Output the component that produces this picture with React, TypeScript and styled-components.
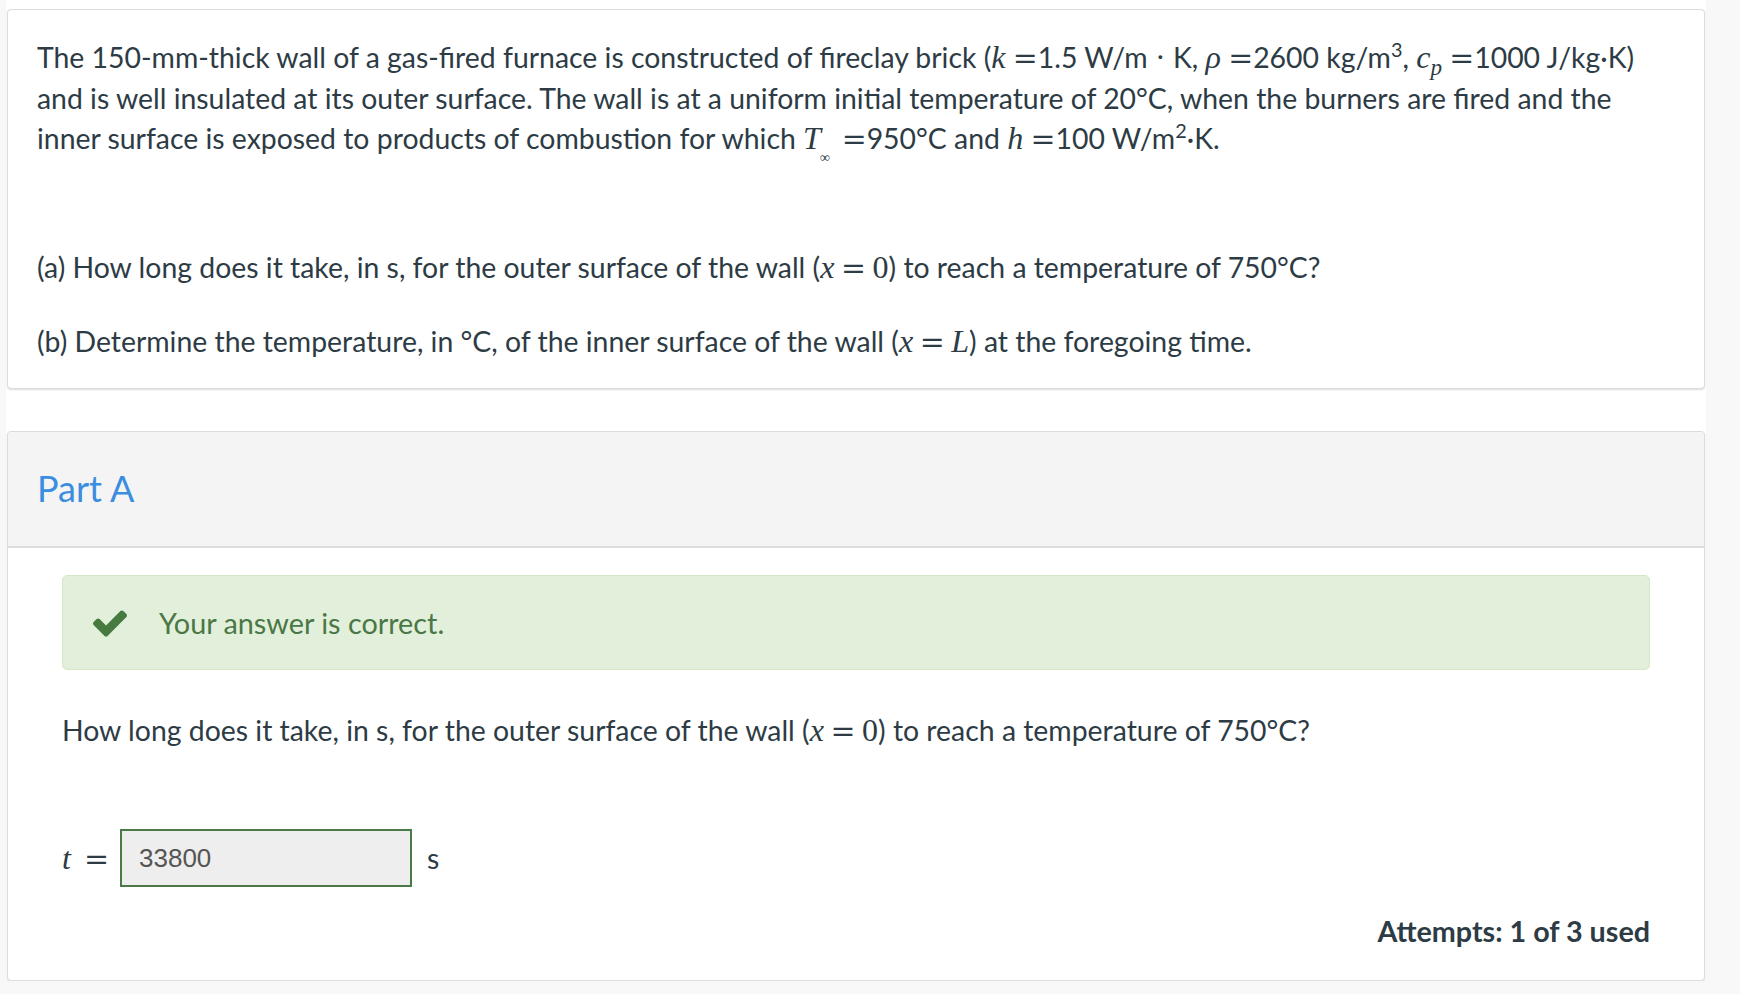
import React from "react";
import styled, { createGlobalStyle } from "styled-components";

const GlobalStyle = createGlobalStyle`
  html, body {
    margin: 0;
    padding: 0;
    background: #f8f8f8;
  }
  body {
    font-family: Lato, "Open Sans", sans-serif;
    color: #2d3b45;
  }
`;

const Page = styled.main`
  margin-left: 6px;
  width: 1700px;
  background: #fff;
  padding-top: 9px;
`;

const Card = styled.section`
  margin: 0 1px;
  background: #fff;
  border: 1px solid #dcdcdc;
  border-radius: 4px;
  box-shadow: 0 1px 2px rgba(0, 0, 0, 0.14);
  overflow: hidden;
`;

const Spacer = styled.div<{ $h: number }>`
  height: ${(p) => p.$h}px;
`;

const QuestionBody = styled.div`
  padding: 27px 14px 26px 29px;
`;

const Para = styled.p<{ $after?: number }>`
  margin: 0 0 ${(p) => p.$after ?? 33}px;
  font-size: 28.4px;
  line-height: 40px;
  &:last-child {
    margin-bottom: 0;
  }
`;

// math variables, in the look of a TeX italic
const M = styled.span`
  font-family: "Liberation Serif", "Times New Roman", serif;
  font-style: italic;
  font-size: 1.13em;
`;

const Num = styled.span`
  font-family: "Liberation Serif", "Times New Roman", serif;
  font-size: 1.13em;
`;

// relation sign: wide TeX-like equals, with optional thick spaces
const Rel = styled.span<{ $spaced?: boolean }>`
  font-family: "DejaVu Serif", "Liberation Serif", serif;
  font-size: 1.05em;
  margin: 0 ${(p) => (p.$spaced ? "0.22em" : "0")};
`;

const Sup = styled.sup`
  font-size: 0.7em;
  line-height: 0;
  vertical-align: 0.55em;
`;

const Sub = styled.sub`
  font-size: 0.72em;
  line-height: 0;
  vertical-align: -0.3em;
`;

const Inf = styled.sub`
  font-family: "Liberation Serif", serif;
  font-style: italic;
  font-size: 0.48em;
  line-height: 0;
  vertical-align: -0.95em;
  margin: 0 12px 0 -1px;
`;

const PartHeader = styled.header`
  background: #f4f4f4;
  border-bottom: 2px solid #dcdcdc;
  padding: 35px 29px 36px;
`;

const PartTitle = styled.h2`
  margin: 0;
  font-size: 36px;
  line-height: 43px;
  font-weight: 400;
  color: #3b8de0;
`;

const PartBody = styled.div`
  padding: 27px 54px 29px 54px;
`;

const Alert = styled.div`
  display: flex;
  align-items: center;
  gap: 32px;
  height: 95px;
  box-sizing: border-box;
  padding: 0 30px;
  background: #e2efda;
  border: 1px solid #d5e7c8;
  border-radius: 5px;
  color: #4a7746;
  font-size: 28.8px;
`;

const CheckSvg = styled.svg`
  width: 34px;
  height: 27px;
  flex-shrink: 0;
  fill: #467a41;
  margin-top: 2px;
`;

function CheckIcon() {
  return (
    <CheckSvg viewBox="121 334 1550 1188" aria-hidden>
      <path d="M1671 566q0 40-28 68l-724 724-136 136q-28 28-68 28t-68-28l-136-136-362-362q-28-28-28-68t28-68l136-136q28-28 68-28t68 28l294 295 656-657q28-28 68-28t68 28l136 136q28 28 28 68z" />
    </CheckSvg>
  );
}

const Question = styled.p`
  margin: 40px 0 0;
  font-size: 28.4px;
  line-height: 40px;
`;

const AnswerRow = styled.div`
  display: flex;
  align-items: center;
  margin-top: 78px;
  font-size: 28.4px;
`;

const Label = styled.span`
  display: flex;
  align-items: baseline;
  margin-right: 11px;
  font-family: "Liberation Serif", "Times New Roman", serif;
  font-size: 32px;
`;

const LabelVar = styled.i`
  margin-right: 13px;
`;

const LabelEq = styled.span`
  font-family: "DejaVu Serif", serif;
  font-size: 30px;
`;

const AnswerBox = styled.div`
  width: 292px;
  height: 58px;
  box-sizing: border-box;
  display: flex;
  align-items: center;
  padding-left: 17px;
  background: #eeeeee;
  border: 2px solid #4a7a45;
  font-family: "Liberation Sans", Arial, sans-serif;
  font-size: 26px;
  color: #555;
`;

const Unit = styled.span`
  margin-left: 15px;
`;

const Attempts = styled.div`
  margin-top: 25px;
  text-align: right;
  font-size: 28.7px;
  line-height: 39px;
  font-weight: 700;
  color: #2d3b45;
`;

export default function App() {
  return (
    <>
      <GlobalStyle />
      <Page>
        <Card>
          <QuestionBody>
            <Para $after={88}>
              The 150-mm-thick wall of a gas-fired furnace is constructed of fireclay brick (
              <M>k</M> <Rel>=</Rel>1.5 W/m <Num>·</Num> K, <M>ρ</M> <Rel>=</Rel>2600 kg/m
              <Sup>3</Sup>,{" "}
              <M>
                c<Sub>p</Sub>
              </M>{" "}
              <Rel>=</Rel>1000 J/kg·K)
              <br />
              and is well insulated at its outer surface. The wall is at a uniform initial
              temperature of 20°C, when the burners are fired and the
              <br />
              inner surface is exposed to products of combustion for which <M>T</M>
              <Inf>∞</Inf>
              <Rel>=</Rel>950°C and <M>h</M> <Rel>=</Rel>100 W/m<Sup>2</Sup>·K.
            </Para>
            <Para>
              (a) How long does it take, in s, for the outer surface of the wall (<M>x</M>
              <Rel $spaced>=</Rel>
              <Num>0</Num>) to reach a temperature of 750°C?
            </Para>
            <Para>
              (b) Determine the temperature, in °C, of the inner surface of the wall (<M>x</M>
              <Rel $spaced>=</Rel>
              <M>L</M>) at the foregoing time.
            </Para>
          </QuestionBody>
        </Card>

        <Spacer $h={42} />

        <Card>
          <PartHeader>
            <PartTitle>Part A</PartTitle>
          </PartHeader>
          <PartBody>
            <Alert>
              <CheckIcon />
              <span>Your answer is correct.</span>
            </Alert>
            <Question>
              How long does it take, in s, for the outer surface of the wall (<M>x</M>
              <Rel $spaced>=</Rel>
              <Num>0</Num>) to reach a temperature of 750°C?
            </Question>
            <AnswerRow>
              <Label>
                <LabelVar>t</LabelVar>
                <LabelEq>=</LabelEq>
              </Label>
              <AnswerBox>33800</AnswerBox>
              <Unit>s</Unit>
            </AnswerRow>
            <Attempts>Attempts: 1 of 3 used</Attempts>
          </PartBody>
        </Card>
      </Page>
    </>
  );
}
